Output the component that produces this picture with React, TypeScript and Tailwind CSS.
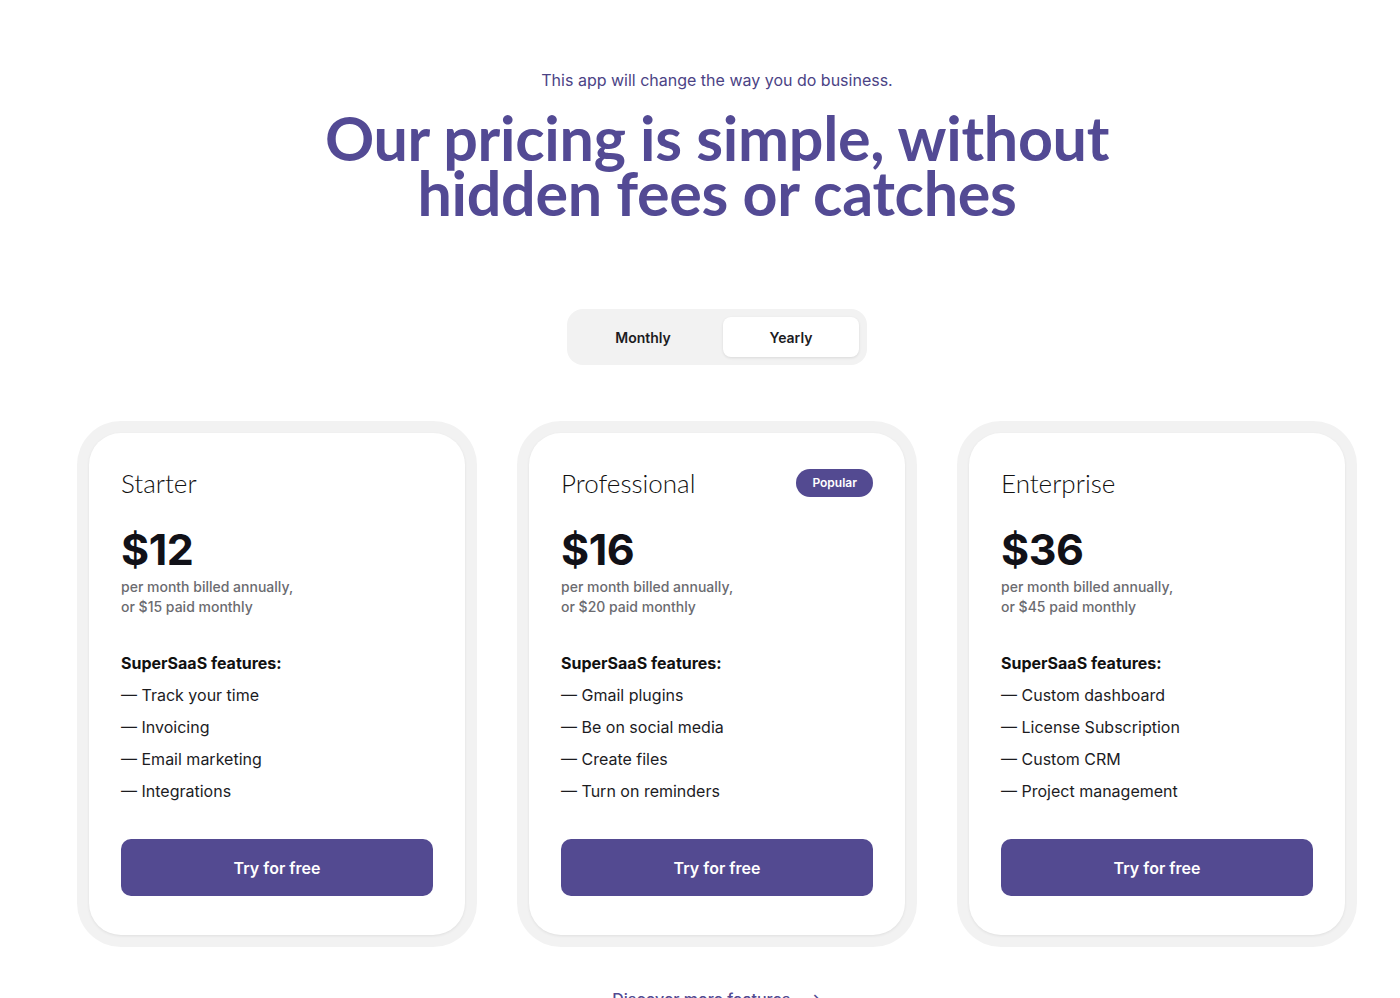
import { useState } from 'react';

type Plan = {
  name: string;
  price: string;
  monthly: string;
  features: string[];
  popular?: boolean;
};

const plans: Plan[] = [
  { name: 'Starter', price: '$12', monthly: '$15', features: ['Track your time', 'Invoicing', 'Email marketing', 'Integrations'] },
  { name: 'Professional', price: '$16', monthly: '$20', popular: true, features: ['Gmail plugins', 'Be on social media', 'Create files', 'Turn on reminders'] },
  { name: 'Enterprise', price: '$36', monthly: '$45', features: ['Custom dashboard', 'License Subscription', 'Custom CRM', 'Project management'] },
];

function PlanCard({ plan }: { plan: Plan }) {
  return (
    <div className="w-[400px] rounded-[44px] bg-[#f2f2f2] p-3">
      <div className="rounded-[32px] bg-white px-8 pt-8 pb-[39px] shadow-[0_1px_3px_rgba(0,0,0,0.08)]">
        <div className="flex h-9 items-center justify-between">
          <h3 className="font-['Lato',sans-serif] text-[26px] font-light leading-9 text-[#111]">{plan.name}</h3>
          {plan.popular && (
            <span className="flex h-7 items-center rounded-full bg-[#534a91] px-4 text-[12px] font-semibold text-white">Popular</span>
          )}
        </div>
        <div className="mt-6 text-[43px] font-bold leading-[48px] tracking-[-0.5px] text-[#111118]">{plan.price}</div>
        <p className="mt-1 text-[14px] font-medium leading-[19.5px] text-[#6b6b70]">
          per month billed annually,
          <br />
          or {plan.monthly} paid monthly
        </p>
        <div className="mt-[35px] text-[16px] font-bold leading-6 text-[#111]">SuperSaaS features:</div>
        <ul className="mt-2 flex flex-col gap-2">
          {plan.features.map((f) => (
            <li key={f} className="text-[16px] leading-6 text-[#1c1c1f]">
              — {f}
            </li>
          ))}
        </ul>
        <button className="mt-9 h-[57px] w-full rounded-[10px] bg-[#534a91] text-[16px] font-semibold text-white">
          Try for free
        </button>
      </div>
    </div>
  );
}

export default function App() {
  const [yearly, setYearly] = useState(true);

  return (
    <div className="min-h-screen overflow-hidden bg-white font-['Inter',sans-serif]">
      <div className="ml-[77px] w-[1280px] pt-[68px]">
        <p className="text-center text-[16px] leading-6 text-[#4b4385]">This app will change the way you do business.</p>
        <h1 className="mt-[18px] text-center font-['Lato',sans-serif] text-[61px] font-bold leading-[55px] tracking-[-0.3px] text-[#534a94]">
          Our pricing is simple, without
          <br />
          hidden fees or catches
        </h1>

        <div className="mt-[89px] flex justify-center">
          <div className="flex gap-3 rounded-2xl bg-[#f2f2f2] p-2">
            <button
              onClick={() => setYearly(false)}
              className={`h-10 w-[136px] rounded-lg text-[14px] font-semibold text-[#1c1c1f] ${!yearly ? 'bg-white shadow-[0_1px_3px_rgba(0,0,0,0.1)]' : ''}`}
            >
              Monthly
            </button>
            <button
              onClick={() => setYearly(true)}
              className={`h-10 w-[136px] rounded-lg text-[14px] font-semibold text-[#1c1c1f] ${yearly ? 'bg-white shadow-[0_1px_3px_rgba(0,0,0,0.1)]' : ''}`}
            >
              Yearly
            </button>
          </div>
        </div>

        <div className="mt-14 flex gap-10">
          {plans.map((p) => (
            <PlanCard key={p.name} plan={p} />
          ))}
        </div>

        <div className="mt-[40px] flex justify-center">
          <a className="flex items-center gap-4 text-[16px] font-medium text-[#534a91]">
            Discover more features
            <span>→</span>
          </a>
        </div>
      </div>
    </div>
  );
}
